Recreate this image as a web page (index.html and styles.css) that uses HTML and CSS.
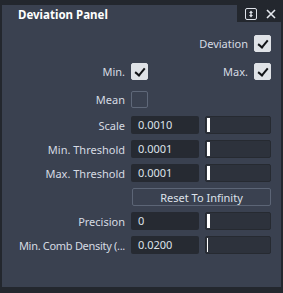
FILE: index.html
```html
<!DOCTYPE html>
<html lang="en">
<head>
    <meta charset="UTF-8">
    <meta name="viewport" content="width=device-width, initial-scale=1.0">
    <title>Deviation Panel</title>
    <link rel="stylesheet" href="styles.css">
</head>
<body>

    <div class="window">
        <div class="titlebar">
            <div class="tab">Deviation Panel</div>
            <div class="tools">
                <svg class="icon" width="12" height="12" viewBox="0 0 12 12">
                    <rect x="0.5" y="0.5" width="11" height="11" rx="1.5" fill="none" stroke="#dfe3ea" stroke-width="1"/>
                    <path d="M6 2.5 L8 5 H4 Z M6 9.5 L8 7 H4 Z" fill="#dfe3ea"/>
                    <rect x="5.3" y="4.5" width="1.4" height="3" fill="#dfe3ea"/>
                </svg>
                <svg class="icon" width="10" height="10" viewBox="0 0 10 10">
                    <path d="M1 1 L9 9 M9 1 L1 9" stroke="#e6e9ef" stroke-width="1.6"/>
                </svg>
            </div>
        </div>

        <div class="panel">
            <div class="cell span-all end">
                <span class="lbl">Deviation</span>
                <span class="check on"></span>
            </div>

            <div class="cell lbl right">Min.</div>
            <div class="cell"><span class="check on"></span></div>
            <div class="cell end">
                <span class="lbl">Max.</span>
                <span class="check on"></span>
            </div>

            <div class="cell lbl right">Mean</div>
            <div class="cell"><span class="check"></span></div>
            <div class="cell"></div>

            <div class="cell lbl right">Scale</div>
            <div class="field">0.0010</div>
            <div class="slider"><span class="handle"></span></div>

            <div class="cell lbl right">Min. Threshold</div>
            <div class="field">0.0001</div>
            <div class="slider"><span class="handle"></span></div>

            <div class="cell lbl right">Max. Threshold</div>
            <div class="field">0.0001</div>
            <div class="slider"><span class="handle"></span></div>

            <div class="cell"></div>
            <button class="btn span-2">Reset To Infinity</button>

            <div class="cell lbl right">Precision</div>
            <div class="field">0</div>
            <div class="slider"><span class="handle"></span></div>

            <div class="cell lbl right"><span class="tight">Min. Comb Density (...</span></div>
            <div class="field">0.0200</div>
            <div class="slider"><span class="handle thin"></span></div>
        </div>
    </div>

</body>
</html>
```

FILE: styles.css
```css
body {
    margin: 0;
    background: #23272e;
    font-family: "Noto Sans", "Open Sans", sans-serif;
    font-size: 11px;
    color: #d6dbe3;
}
.window {
    margin: 5px 2px 0 2px;
    height: 282px;
    display: flex;
    flex-direction: column;
}
.titlebar {
    display: flex;
    height: 17px;
}
.tab {
    width: 235px;
    background: #3a4150;
    color: #ffffff;
    font-weight: bold;
    font-size: 11.5px;
    padding-left: 16px;
    line-height: 20px;
    box-sizing: border-box;
}
.tools {
    flex: 1;
    display: flex;
    align-items: center;
    gap: 9px;
    padding-left: 8px;
    margin-top: 1px;
}
.icon {
    display: block;
}
.panel {
    flex: 1;
    background: #3a4150;
    display: grid;
    grid-template-columns: 1fr 68px 66px;
    grid-template-rows: 22px 22px 22px repeat(6, 18px);
    column-gap: 6px;
    row-gap: 6px;
    padding: 10px 10px 0 0;
    align-content: start;
}
.cell {
    display: flex;
    align-items: center;
    gap: 6px;
}
.span-all {
    grid-column: 1 / 4;
}
.span-2 {
    grid-column: 2 / 4;
}
.end {
    justify-content: flex-end;
}
.right {
    justify-content: flex-end;
    white-space: nowrap;
}
.tight {
    letter-spacing: -0.3px;
}
.lbl {
    color: #d6dbe3;
}
.check {
    width: 17px;
    height: 17px;
    box-sizing: border-box;
    border: 1px solid #5f6879;
    border-radius: 2px;
    position: relative;
}
.check.on {
    background: #dfe2e7;
    border-color: #dfe2e7;
}
.check.on::after {
    content: "";
    position: absolute;
    left: 5px;
    top: 2px;
    width: 4px;
    height: 8px;
    border: solid #111317;
    border-width: 0 2.5px 2.5px 0;
    transform: rotate(40deg);
}
.field {
    background: #262a32;
    border-radius: 2px;
    padding-left: 7px;
    line-height: 18px;
    color: #dde2ea;
}
.slider {
    background: #2d323c;
    border: 1px solid #262a31;
    border-radius: 2px;
    box-sizing: border-box;
    position: relative;
}
.handle {
    position: absolute;
    left: 1px;
    top: 1px;
    bottom: 1px;
    width: 3px;
    background: #ffffff;
}
.handle.thin {
    width: 1px;
}
.btn {
    background: #3a4150;
    border: 1px solid #5c6576;
    border-radius: 2px;
    color: #dde2ea;
    font-family: "Noto Sans", "Open Sans", sans-serif;
    font-size: 11px;
    padding: 0;
    margin-left: 1px;
}
```
